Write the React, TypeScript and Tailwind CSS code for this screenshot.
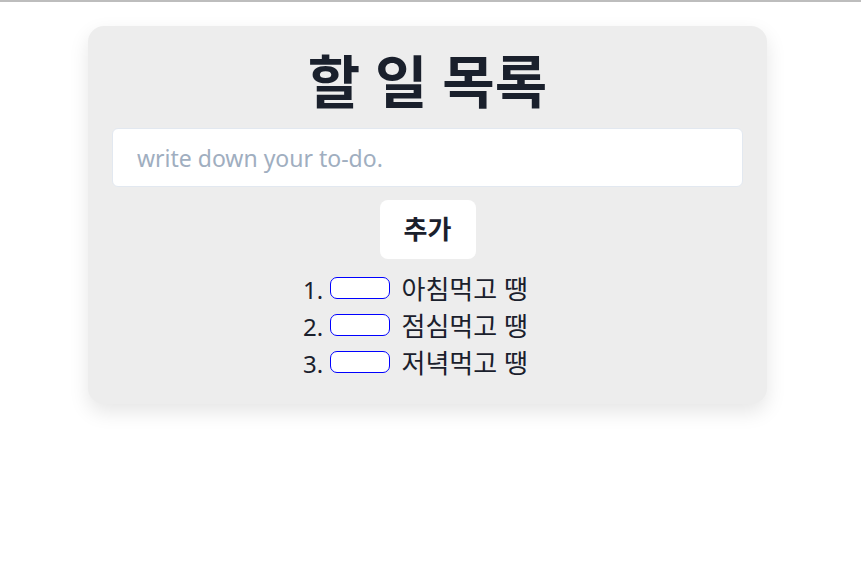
import React, { useState } from 'react';

const font = { fontFamily: '"Noto Sans", "Noto Sans CJK KR", sans-serif' };

export default function App() {
  const [todos] = useState(['아침먹고 땡', '점심먹고 땡', '저녁먹고 땡']);
  const [text, setText] = useState('');

  return (
    <div className="min-h-[586px] bg-white border-t-2 border-[#bdbdbd]" style={font}>
      <div className="pt-6 pl-[88px]">
        <div className="w-[679px] bg-[#ededed] rounded-2xl shadow-[0_8px_20px_rgba(0,0,0,0.1)] px-6 pt-[21px] pb-[22px] flex flex-col items-center">
          {/* Title */}
          <h1 className="text-[57px] leading-[68px] font-bold text-[#1a202c]">할 일 목록</h1>

          {/* Input */}
          <input
            value={text}
            onChange={(e) => setText(e.target.value)}
            placeholder="write down your to-do."
            className="mt-[13px] w-full h-[59px] bg-white border border-[#e2e8f0] rounded-md pl-6 text-[23px] text-[#1a202c] placeholder:text-[#a0aec0] outline-none"
          />

          {/* Add button */}
          <button className="mt-[13px] w-[96px] h-[59px] bg-white rounded-lg text-[26px] font-bold text-[#1a202c]">
            추가
          </button>

          {/* List */}
          <ol className="mt-[12px] mr-[24px] list-decimal list-inside text-[24px] leading-9 text-[#1a202c]">
            {todos.map((todo) => (
              <li key={todo}>
                <button className="inline-block align-middle -mt-[9px] w-[60px] h-[22px] border border-[#0000ff] rounded-[7px] bg-white mr-3" />
                <span className="text-[26px] leading-9">{todo}</span>
              </li>
            ))}
          </ol>
        </div>
      </div>
    </div>
  );
}
